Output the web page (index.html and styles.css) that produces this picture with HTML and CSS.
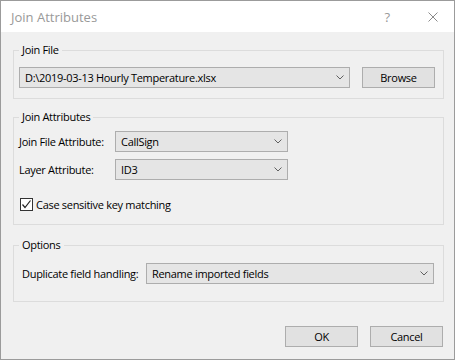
FILE: index.html
```html
<!DOCTYPE html>
<html lang="en">
<head>
  <meta charset="UTF-8">
  <title>Join Attributes</title>
  <link rel="stylesheet" href="styles.css">
</head>
<body>
  <div class="window">
    <div class="titlebar">
      <span class="title">Join Attributes</span>
      <span class="help">?</span>
      <svg class="close" width="10" height="10" viewBox="0 0 10 10">
        <path d="M0.5 0.5 L9.5 9.5 M9.5 0.5 L0.5 9.5" stroke="#8a8a8a" stroke-width="1" fill="none"/>
      </svg>
    </div>

    <div class="content">
      <fieldset class="group group-file">
        <legend>Join File</legend>
        <div class="file-row">
          <div class="combo combo-file">
            <span class="combo-text">D:\2019-03-13 Hourly Temperature.xlsx</span>
            <svg class="chevron" width="8" height="5" viewBox="0 0 8 5"><path d="M0.5 0.5 L4 4 L7.5 0.5" stroke="#606060" fill="none"/></svg>
          </div>
          <button class="btn">Browse</button>
        </div>
      </fieldset>

      <fieldset class="group group-attrs">
        <legend>Join Attributes</legend>
        <div class="field">
          <span class="field-label">Join File Attribute:</span>
          <div class="combo combo-attr">
            <span class="combo-text">CallSign</span>
            <svg class="chevron" width="8" height="5" viewBox="0 0 8 5"><path d="M0.5 0.5 L4 4 L7.5 0.5" stroke="#606060" fill="none"/></svg>
          </div>
        </div>
        <div class="field">
          <span class="field-label">Layer Attribute:</span>
          <div class="combo combo-attr">
            <span class="combo-text">ID3</span>
            <svg class="chevron" width="8" height="5" viewBox="0 0 8 5"><path d="M0.5 0.5 L4 4 L7.5 0.5" stroke="#606060" fill="none"/></svg>
          </div>
        </div>
        <div class="check-row">
          <span class="checkbox">
            <svg width="11" height="11" viewBox="0 0 11 11"><path d="M1.5 5.5 L4 8.5 L9.5 1.5" stroke="#222" stroke-width="1.2" fill="none"/></svg>
          </span>
          <span>Case sensitive key matching</span>
        </div>
      </fieldset>

      <fieldset class="group group-options">
        <legend>Options</legend>
        <div class="field option-field">
          <span class="option-label">Duplicate field handling:</span>
          <div class="combo combo-dup">
            <span class="combo-text">Rename imported fields</span>
            <svg class="chevron" width="8" height="5" viewBox="0 0 8 5"><path d="M0.5 0.5 L4 4 L7.5 0.5" stroke="#606060" fill="none"/></svg>
          </div>
        </div>
      </fieldset>

      <div class="actions">
        <button class="btn">OK</button>
        <button class="btn">Cancel</button>
      </div>
    </div>
  </div>
</body>
</html>
```

FILE: styles.css
```css
body {
  margin: 0;
  background: #fff;
  font-family: "Segoe UI", "Open Sans", sans-serif;
  font-size: 11px;
  letter-spacing: -0.3px;
  color: #000;
}
.window {
  width: 455px;
  height: 360px;
  box-sizing: border-box;
  border: 1px solid #9b9b9b;
  background: #f0f0f0;
}
.titlebar {
  height: 31px;
  background: #fff;
  display: flex;
  align-items: center;
  padding-left: 10px;
  color: #999;
  font-size: 13px;
  letter-spacing: 0;
}
.title {
  flex: 1;
}
.help {
  margin-right: 38px;
}
.close {
  margin-right: 16px;
}
.content {
  padding: 10px 0 0 12px;
}
.group {
  margin: 0;
  width: 431px;
  box-sizing: border-box;
  border: 1px solid #dcdcdc;
  padding: 9px 5px 10px;
}
.group legend {
  padding: 0 3px;
  line-height: 16px;
}
.group-attrs {
  margin-top: 10px;
  padding-top: 6px;
  padding-bottom: 13px;
}
.group-options {
  margin-top: 12px;
  padding-top: 10px;
  padding-bottom: 17px;
}
.file-row {
  display: flex;
  align-items: center;
  gap: 12px;
}
.combo {
  height: 21px;
  box-sizing: border-box;
  border: 1px solid #adadad;
  background: #e5e5e5;
  display: flex;
  align-items: center;
  padding: 0 5px 0 5px;
  flex-shrink: 0;
}
.combo-text {
  flex: 1;
  white-space: nowrap;
}
.combo-file {
  width: 331px;
}
.combo-attr {
  width: 173px;
}
.combo-dup {
  width: 288px;
}
.btn {
  width: 73px;
  height: 21px;
  box-sizing: border-box;
  border: 1px solid #adadad;
  background: #e1e1e1;
  font: inherit;
  letter-spacing: inherit;
  color: #000;
  padding: 0;
}
.field {
  display: flex;
  align-items: center;
  height: 21px;
}
.field + .field {
  margin-top: 7px;
}
.field-label,
.option-label {
  white-space: nowrap;
  flex-shrink: 0;
}
.field-label {
  width: 96px;
}
.option-field {
  padding-left: 3px;
}
.option-label {
  width: 124px;
}
.check-row {
  display: flex;
  align-items: center;
  gap: 3px;
  margin-top: 18px;
  padding-left: 1px;
  height: 13px;
  white-space: nowrap;
}
.checkbox {
  width: 13px;
  height: 13px;
  box-sizing: border-box;
  border: 1px solid #333;
  background: #fff;
  display: flex;
  align-items: center;
  justify-content: center;
}
.actions {
  display: flex;
  justify-content: flex-end;
  gap: 12px;
  margin-top: 24px;
  padding-right: 11px;
}
```
